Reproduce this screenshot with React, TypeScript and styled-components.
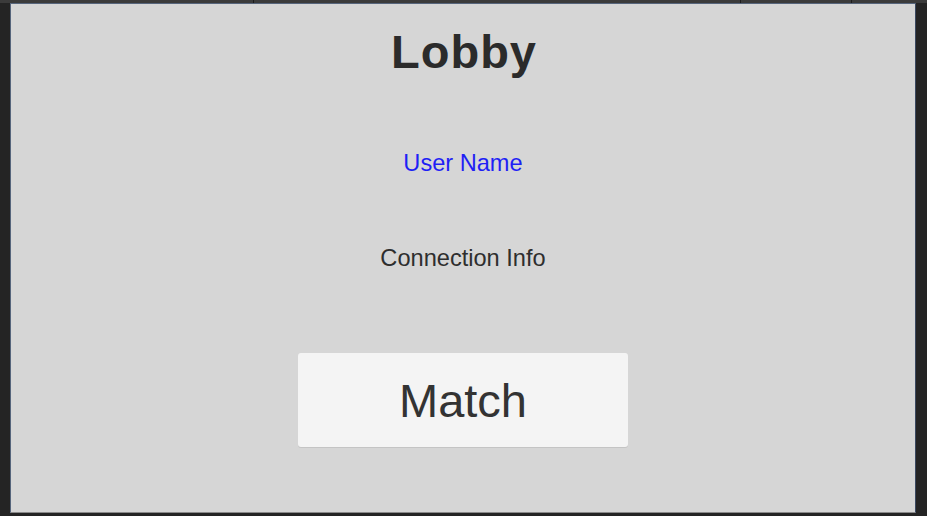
import styled, { createGlobalStyle } from "styled-components";

const GlobalStyle = createGlobalStyle`
  html, body {
    margin: 0;
    padding: 0;
    background: #232323;
    width: 927px;
    height: 516px;
    overflow: hidden;
  }
`;

const Screen = styled.div`
  width: 927px;
  height: 516px;
  display: flex;
  flex-direction: column;
  background: #242424;
`;

const TopStrip = styled.div`
  height: 3px;
  display: flex;
  gap: 1px;
  background: #1c1c1c;
`;

const StripSegment = styled.div<{ $w: number }>`
  width: ${({ $w }) => $w}px;
  flex-shrink: 0;
  background: #3b3b3b;
`;

const Body = styled.div`
  display: flex;
  padding-left: 10px;
`;

const Panel = styled.div`
  width: 906px;
  height: 510px;
  box-sizing: border-box;
  background: #d6d6d6;
  border-left: 1px solid #56657c;
  border-top: 1px solid #56657c;
  border-right: 1px solid #3a4860;
  border-bottom: 1px solid #8a8a8a;
  display: flex;
  flex-direction: column;
  align-items: center;
  font-family: "Liberation Sans", Arial, sans-serif;
`;

const Title = styled.h1`
  margin: 20px 0 0 2px;
  font-size: 47px;
  line-height: 56px;
  font-weight: 700;
  letter-spacing: 1px;
  color: #2b2b2b;
`;

const Label = styled.div<{ $color: string; $top: number }>`
  margin-top: ${({ $top }) => $top}px;
  font-size: 23.6px;
  line-height: 28px;
  color: ${({ $color }) => $color};
`;

const MatchButton = styled.button`
  margin-top: 81px;
  width: 330px;
  height: 94px;
  border: none;
  border-radius: 3px;
  background: #f4f4f4;
  box-shadow: 0 1px 0 #c4c4c4;
  font-family: "Liberation Sans", Arial, sans-serif;
  font-size: 47px;
  color: #333333;
  padding: 0;
`;

export default function App() {
  return (
    <>
      <GlobalStyle />
      <Screen>
        <TopStrip>
          <StripSegment $w={253} />
          <StripSegment $w={486} />
          <StripSegment $w={110} />
          <StripSegment $w={75} />
        </TopStrip>
        <Body>
          <Panel>
            <Title>Lobby</Title>
            <Label $color="#1f1ff5" $top={69}>
              User Name
            </Label>
            <Label $color="#2e2e2e" $top={67}>
              Connection Info
            </Label>
            <MatchButton>Match</MatchButton>
          </Panel>
        </Body>
      </Screen>
    </>
  );
}
